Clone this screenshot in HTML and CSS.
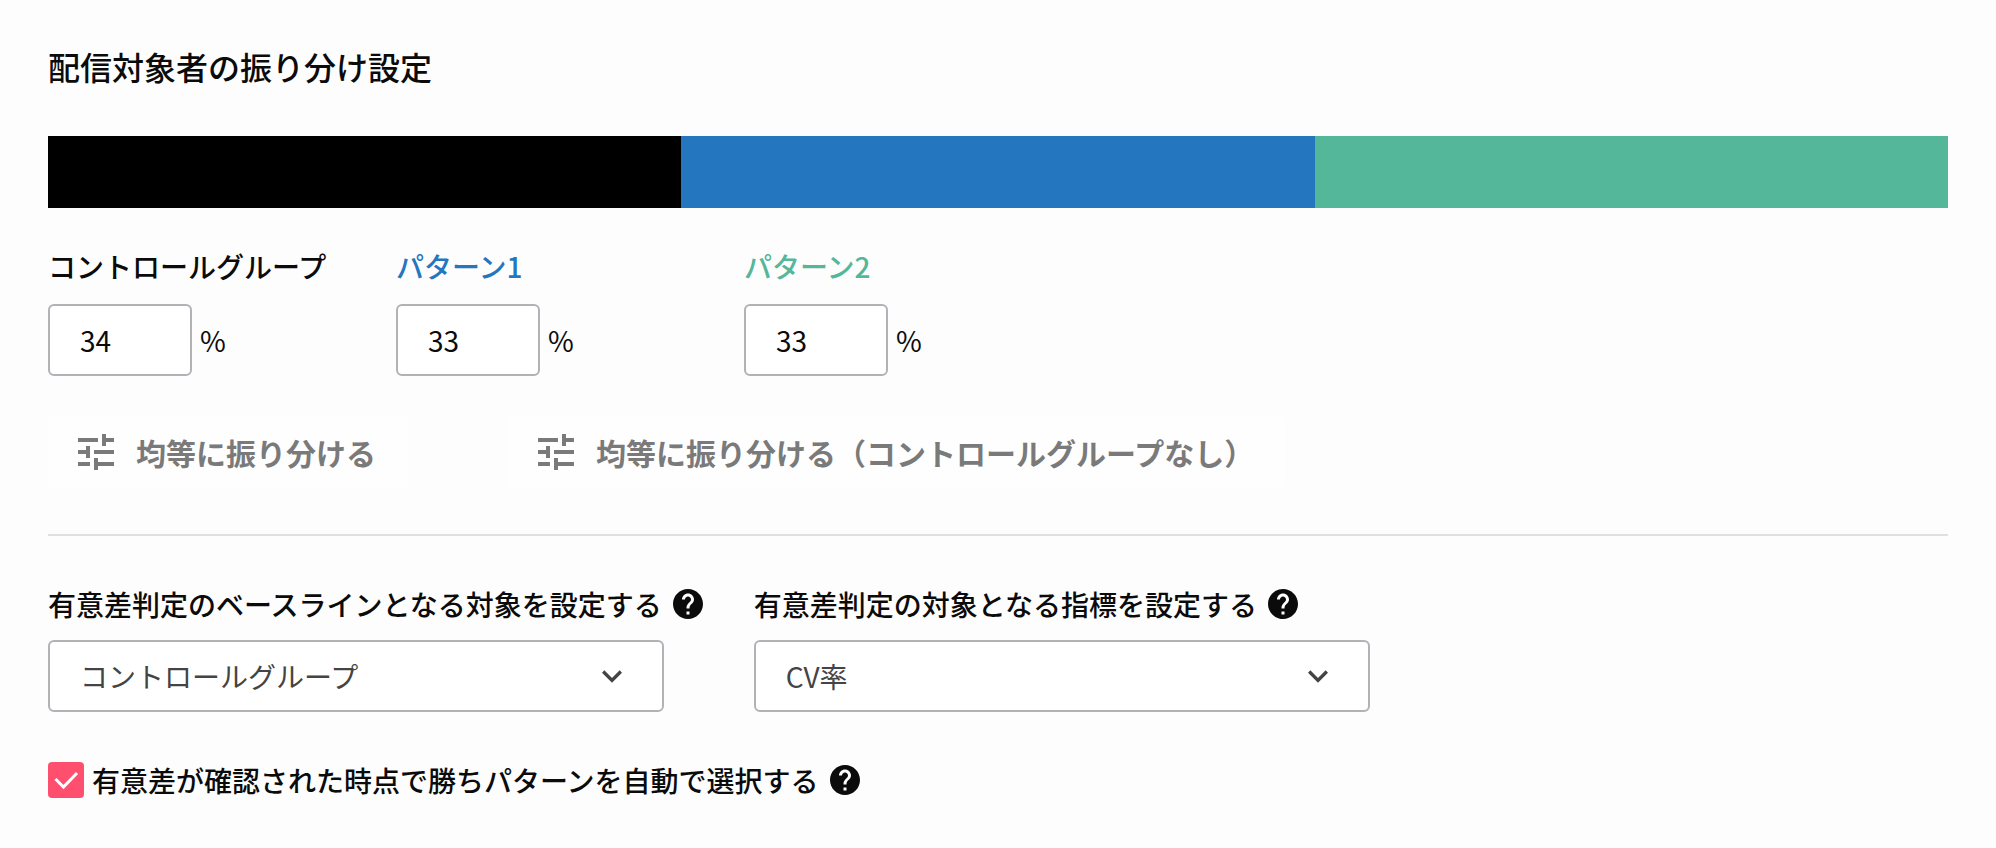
FILE: index.html
```html
<!DOCTYPE html>
<html lang="ja">
<head>
    <meta charset="UTF-8">
    <meta name="viewport" content="width=device-width, initial-scale=1.0">
    <title>配信対象者の振り分け設定</title>
    <link rel="stylesheet" href="styles.css">
</head>
<body>
    <!-- 共通アイコン -->
    <svg class="icon-defs" aria-hidden="true">
        <symbol id="icon-tune" viewBox="0 0 24 24">
            <path d="M3 17v2h6v-2H3zM3 5v2h10V5H3zm10 16v-2h8v-2h-8v-2h-2v6h2zM7 9v2H3v2h4v2h2V9H7zm14 4v-2H11v2h10zm-6-4h2V7h4V5h-4V3h-2v6z"/>
        </symbol>
        <symbol id="icon-help" viewBox="0 0 24 24">
            <path d="M12 2C6.48 2 2 6.48 2 12s4.48 10 10 10 10-4.48 10-10S17.52 2 12 2zm1 17h-2v-2h2v2zm2.07-7.75l-.9.92C13.45 12.9 13 13.5 13 15h-2v-.5c0-1.1.45-2.1 1.17-2.83l1.24-1.26c.37-.36.59-.86.59-1.41 0-1.1-.9-2-2-2s-2 .9-2 2H8c0-2.21 1.79-4 4-4s4 1.79 4 4c0 .88-.36 1.68-.93 2.25z"/>
        </symbol>
        <symbol id="icon-arrow" viewBox="0 0 24 24">
            <path d="M7.41 8.59L12 13.17l4.59-4.58L18 10l-6 6-6-6z"/>
        </symbol>
    </svg>

    <main class="settings">
        <h1 class="title">配信対象者の振り分け設定</h1>

        <!-- 振り分け比率のバー -->
        <div class="ratio-bar">
            <div class="ratio control"></div>
            <div class="ratio pattern1"></div>
            <div class="ratio pattern2"></div>
        </div>

        <!-- 比率の入力欄 -->
        <div class="groups">
            <div class="group">
                <label class="label" for="control">コントロールグループ</label>
                <div class="percent">
                    <input type="text" id="control" class="percent-input" inputmode="numeric" value="34">
                    <span>%</span>
                </div>
            </div>
            <div class="group">
                <label class="label label-pattern1" for="pattern1">パターン1</label>
                <div class="percent">
                    <input type="text" id="pattern1" class="percent-input" inputmode="numeric" value="33">
                    <span>%</span>
                </div>
            </div>
            <div class="group">
                <label class="label label-pattern2" for="pattern2">パターン2</label>
                <div class="percent">
                    <input type="text" id="pattern2" class="percent-input" inputmode="numeric" value="33">
                    <span>%</span>
                </div>
            </div>
        </div>

        <div class="actions">
            <button type="button" class="btn">
                <svg class="btn-icon"><use href="#icon-tune"/></svg>
                均等に振り分ける
            </button>
            <button type="button" class="btn">
                <svg class="btn-icon"><use href="#icon-tune"/></svg>
                均等に振り分ける（コントロールグループなし）
            </button>
        </div>

        <hr class="divider">

        <!-- 有意差判定 -->
        <div class="fields">
            <div class="field">
                <div class="field-label">
                    <label class="label" for="baseline">有意差判定のベースラインとなる対象を設定する</label>
                    <svg class="help"><use href="#icon-help"/></svg>
                </div>
                <div class="select-box">
                    <select id="baseline" class="select">
                        <option>コントロールグループ</option>
                        <option>パターン1</option>
                        <option>パターン2</option>
                    </select>
                    <svg class="arrow"><use href="#icon-arrow"/></svg>
                </div>
            </div>
            <div class="field">
                <div class="field-label">
                    <label class="label" for="metric">有意差判定の対象となる指標を設定する</label>
                    <svg class="help"><use href="#icon-help"/></svg>
                </div>
                <div class="select-box">
                    <select id="metric" class="select">
                        <option>CV率</option>
                    </select>
                    <svg class="arrow"><use href="#icon-arrow"/></svg>
                </div>
            </div>
        </div>

        <div class="auto">
            <span class="check-box">
                <input type="checkbox" id="auto" class="check" checked>
                <svg class="check-mark" viewBox="0 0 36 36"><path d="M7.5 17l8 8L29 11"/></svg>
            </span>
            <label class="label" for="auto">有意差が確認された時点で勝ちパターンを自動で選択する</label>
            <svg class="help"><use href="#icon-help"/></svg>
        </div>
    </main>
</body>
</html>
```
FILE: styles.css
```css
* {
    box-sizing: border-box;
}

body {
    margin: 0;
    background-color: #fdfdfd;
    color: #0b0b0b;
    font-family: "Noto Sans CJK JP", sans-serif;
    font-size: 28px;
    line-height: 40px;
}

svg {
    display: block;
    flex-shrink: 0;
    fill: currentColor;
}

.icon-defs {
    display: none;
}

.settings {
    padding: 42px 48px;
}

.title {
    margin: 0 0 46px;
    font-size: 32px;
    font-weight: 500;
    line-height: 48px;
}

/* 比率バー */
.ratio-bar {
    display: flex;
    height: 72px;
    margin-bottom: 38px;
}

.ratio {
    flex: 1;
}

.control {
    background-color: #000;
}

.pattern1 {
    background-color: #2477bf;
}

.pattern2 {
    background-color: #55b79a;
}

/* 入力欄 */
.groups {
    display: flex;
    flex-wrap: wrap;
    gap: 24px 68px;
    margin-bottom: 40px;
}

.group {
    width: 280px;
}

.label {
    font-weight: 500;
}

.label-pattern1 {
    color: #2477bf;
}

.label-pattern2 {
    color: #55b79a;
}

.percent {
    display: flex;
    align-items: center;
    gap: 8px;
    margin-top: 18px;
}

.percent-input {
    width: 144px;
    height: 72px;
    padding: 0 30px;
    border: 2px solid #b1b1b6;
    border-radius: 6px;
    background-color: #fff;
    color: inherit;
    font: inherit;
}

/* ボタン */
.actions {
    display: flex;
    flex-wrap: wrap;
    gap: 24px 100px;
    margin-bottom: 46px;
}

.btn {
    display: flex;
    align-items: center;
    gap: 16px;
    height: 72px;
    padding: 0 32px 0 24px;
    border: none;
    border-radius: 6px;
    background-color: #fefefe;
    color: #7a7a7a;
    font-family: inherit;
    font-size: 30px;
    font-weight: 700;
    cursor: pointer;
}

.btn-icon {
    width: 48px;
    height: 48px;
}

.divider {
    height: 2px;
    margin: 0 0 48px;
    border: none;
    background-color: #e0e0e0;
}

/* 有意差判定 */
.fields {
    display: flex;
    flex-wrap: wrap;
    gap: 24px 48px;
    margin-bottom: 48px;
}

.field-label {
    display: flex;
    align-items: center;
    gap: 8px;
}

.help {
    width: 36px;
    height: 36px;
}

.select-box {
    position: relative;
    width: 616px;
    max-width: 100%;
    margin-top: 16px;
}

.select {
    appearance: none;
    display: block;
    width: 100%;
    height: 72px;
    padding: 0 72px 0 30px;
    border: 2px solid #b1b1b6;
    border-radius: 6px;
    background-color: #fff;
    color: #444;
    font: inherit;
}

.arrow {
    position: absolute;
    top: 16px;
    right: 32px;
    width: 40px;
    height: 40px;
    color: #444;
    pointer-events: none;
}

/* チェックボックス */
.auto {
    display: flex;
    align-items: center;
    gap: 8px;
}

.check-box {
    position: relative;
    width: 36px;
    height: 36px;
}

.check {
    appearance: none;
    display: block;
    width: 36px;
    height: 36px;
    margin: 0;
    border: 2px solid #b1b1b6;
    border-radius: 4px;
    background-color: #fff;
}

.check:checked {
    border-color: #ff4f6e;
    background-color: #ff4f6e;
}

.check-mark {
    position: absolute;
    top: 0;
    left: 0;
    width: 36px;
    height: 36px;
    fill: none;
    stroke: #fff;
    stroke-width: 3;
    pointer-events: none;
}
```
